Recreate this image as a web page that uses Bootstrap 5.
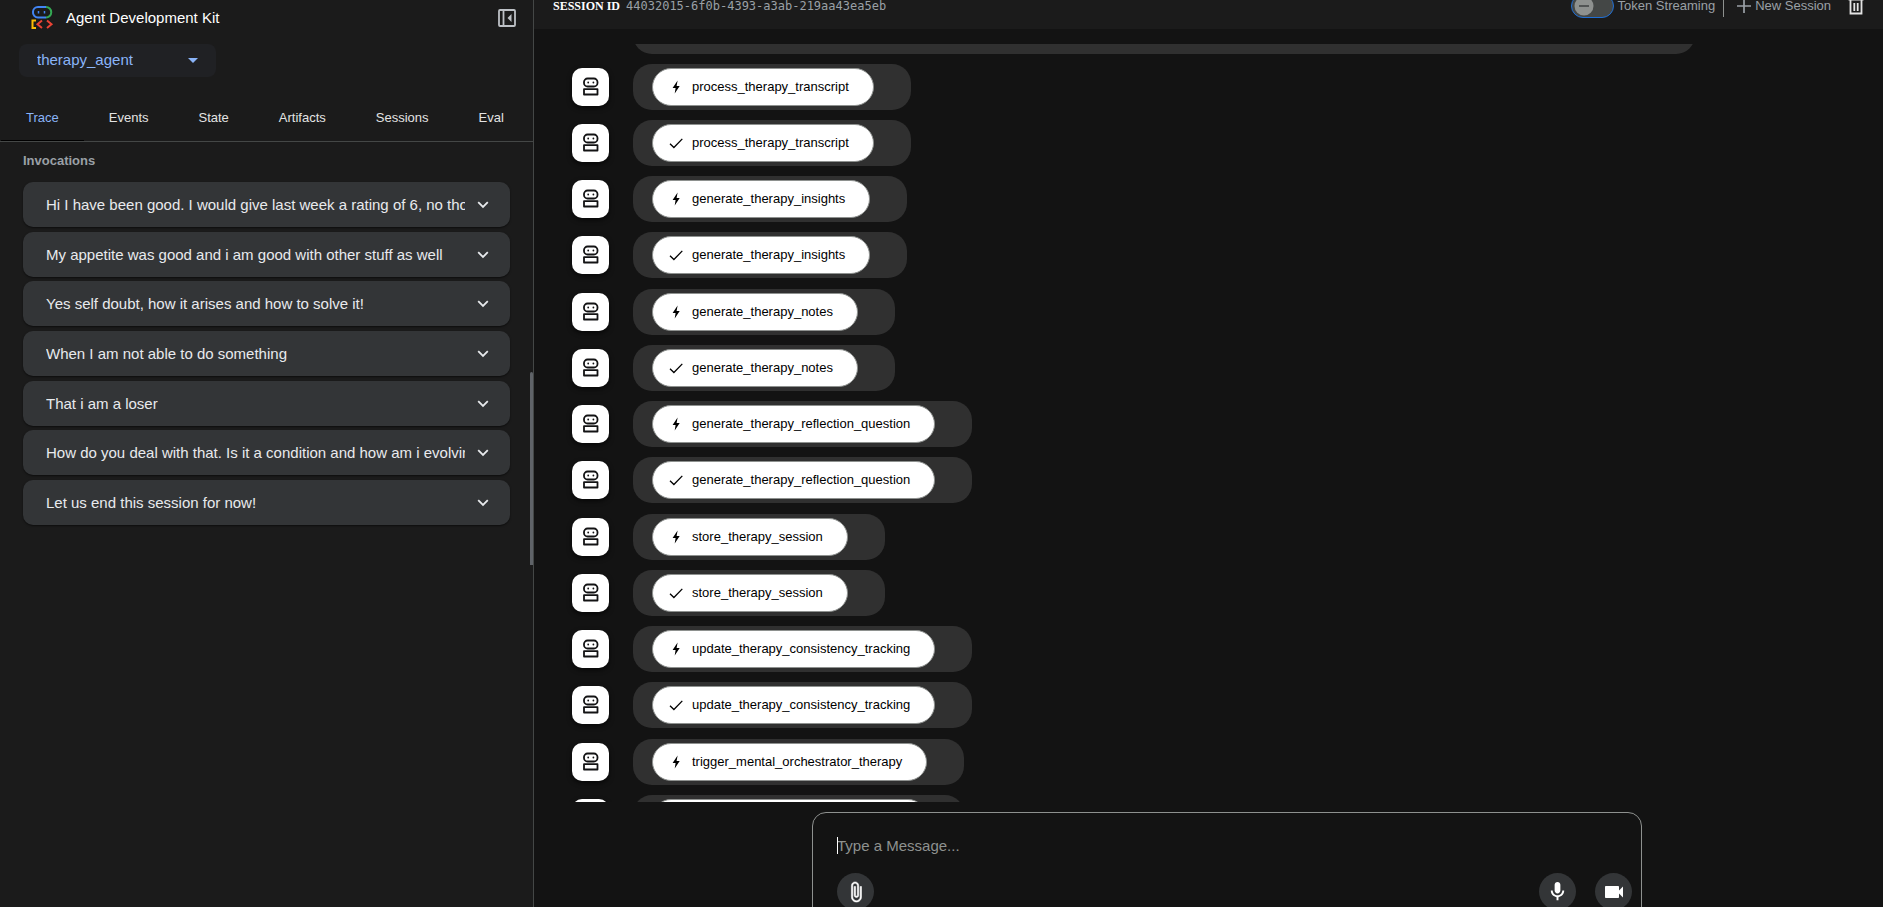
<!DOCTYPE html>
<html lang="en">
<head>
<meta charset="utf-8">
<meta name="viewport" content="width=device-width, initial-scale=1">
<title>Agent Development Kit</title>
<link href="https://cdn.jsdelivr.net/npm/bootstrap@5.3.0/dist/css/bootstrap.min.css" rel="stylesheet">
<style>
body{background:#131313;color:#e8eaed;font-family:"Liberation Sans",Arial,sans-serif;font-size:13px;line-height:20px}
svg{display:block;flex:none}
.side-panel{width:534px;background:#1b1b1b;border-right:1px solid #444746}
.brand-row{height:32px;padding:0 16px 0 30px}
.brand-name{font-size:15px;line-height:20px;color:#fff;font-weight:400}
.icon-btn{color:#bdc1c6;background:none;border:0;padding:0}
.app-pick{width:197px;height:33px;margin:12px 0 0 19px;background:#202124;border-radius:8px}
.app-pick select{appearance:none;background:none;border:0;color:#8ab4f8;font-size:15px;padding:0 18px;width:100%;height:32px;outline:0;display:block}
.app-pick svg{position:absolute;right:18px;top:14px;pointer-events:none}
.tab-strip{margin-top:17px;height:48px;padding-left:1px;border-bottom:1px solid #444746}
.tab-strip .nav-link{color:#e3e3e3;padding:0 25px;line-height:48px;height:47px;font-size:13px;border-bottom:1px solid transparent;border-radius:0}
.tab-strip .nav-link.active{color:#8ab4f8;border-bottom-color:#000}
.section-title{color:#9aa0a6;font-size:13px;line-height:20px;font-weight:700;margin:9px 23px 11px}
.invocations{margin:0 23px}
.invocations li{margin-bottom:5px}
.invocations li:nth-child(3n+2){margin-bottom:4px}
.invocation{height:45px;background:#333537;border:0;border-radius:10px;padding:0 21px 0 23px;color:#e8eaed;font-size:15px;box-shadow:0 1px 2px #0008}
.invocation span{overflow:hidden;white-space:nowrap;text-align:left;flex:1;margin-right:12px}
.resize-grip{position:absolute;right:0;top:41%;width:3px;height:193px;background:#5f6368;border-radius:2px 2px 0 0}
.top-bar{height:46px;margin-top:-17px;background:#1b1b1b;padding:0 18px 0 19px;color:#9aa0a6}
.session-label{font:700 12px/16px "Liberation Serif",serif;color:#fff;margin-right:6px}
.session-id{font:12px/16px "DejaVu Sans Mono",monospace;color:#9aa0a6}
.stream-switch.form-check-input{width:43px;height:24px;margin:0 4px 0 0;border:1px solid #1f6fd6;border-radius:12px;background:#444746;appearance:none;box-shadow:none}
.switch-box svg{position:absolute;left:3px;top:2px;pointer-events:none}
.bar-text{font-size:13px;line-height:20px;color:#9aa0a6}
.split-line{width:1px;height:22px;background:#8e918f;margin:0 13px 0 8px}
.log{margin-top:15px;padding-left:38px;min-height:0}
.log-row{height:46px;margin-bottom:10px;gap:24px}
.log-row:nth-child(4n+5){margin-bottom:11px}
.bot-face{width:37px;height:38px;border-radius:10px;background:#fff;color:#131314;box-shadow:0 2px 5px #000a}
.bubble{height:46px;border-radius:19px;background:#303030;padding:0 37px 0 19px}
.long-bubble{height:46px;border-radius:19px;background:#303030;width:81%;margin-left:61px}
.log-tail{flex:none;height:10px;margin-bottom:10px;overflow:hidden}
.chip{height:38px;border-radius:19px;border:1px solid #8e918f;background:#fff;color:#000;font-size:13px;padding:0 24px 0 15px;gap:8px}
.composer-zone{flex:0 0 105px;min-height:0;padding:10px 0 0 37px}
.composer{width:830px;max-width:100%;height:125px;flex:none;border:1px solid #8e918f;border-radius:14px;padding:22px 9px 0 24px}
.composer textarea{background:none;border:0;outline:0;resize:none;color:#e8eaed;font-size:15px;line-height:22px;height:22px;padding:0;width:100%;display:block;overflow:hidden}
.composer textarea::placeholder{color:#8e918f;opacity:1}
.text-caret{position:absolute;left:0;top:2px;width:1px;height:17px;background:#fff}
.round-btn{width:37px;height:37px;border:0;padding:0;border-radius:50%;background:#333537;color:#fff}
.media-btns{gap:19px}
</style>
</head>
<body>
<svg width="0" height="0" class="position-absolute" aria-hidden="true">
<symbol id="bot" viewBox="0 0 20 20"><g fill="none" stroke="currentColor" stroke-width="1.8"><rect x="3" y="1.5" width="13.5" height="8" rx="3.6"/><path d="M3 12.2h13.5v5.3H3z" stroke-linejoin="round"/></g><circle cx="7.200" cy="5.5" r=".9" fill="currentColor"/><circle cx="12.4" cy="5.5" r=".9" fill="currentColor"/></symbol>
<symbol id="bolt" viewBox="0 0 16 16"><path d="M9.6 1.5 4.6 9h3l-.9 5.5L11.700 7H8.600z" fill="currentColor"/></symbol>
<symbol id="check" viewBox="0 0 16 16"><path d="m2 8.7 3.900 3.800 8.400-8.600" fill="none" stroke="currentColor" stroke-width="1.300"/></symbol>
<symbol id="chev" viewBox="0 0 12 12"><path d="m1.200 3.200 4.800 4.800 4.800-4.800" fill="none" stroke="currentColor" stroke-width="1.800"/></symbol>
</svg>
<div class="d-flex vh-100 overflow-hidden">
<aside class="side-panel position-relative flex-shrink-0">
 <header class="brand-row d-flex align-items-center">
  <svg width="24" height="26" viewBox="0 0 24 26" fill="none" stroke-width="2" class="me-2 mt-1"><path d="M12 2H8a5 5 0 0 0-5 5 5 5 0 0 0 5 5.500h8" stroke="#4285f4"/><path d="M12 2h4" stroke="#4285f4"/><path d="M16 2a5.200 5.200 0 0 1 0 10.500" stroke="#34a853"/><path d="M8.500 6v2.400M14.500 6v2.400" stroke="#4285f4" stroke-width="1.500"/><path d="M6 15.500H2.500V23H6" stroke="#fbbc04"/><path d="m12 15.500-4.500 3.700 4.500 3.700M17 15.500l4.500 3.700-4.500 3.700" stroke="#ea4335"/></svg>
  <h1 class="brand-name mb-0 mt-1 ms-1">Agent Development Kit</h1>
  <button class="icon-btn ms-auto mt-1" aria-label="Close panel"><svg width="20" height="20" viewBox="0 0 20 20" fill="none" stroke="currentColor" stroke-width="1.800"><rect x="2" y="2" width="16" height="16" rx="1"/><path d="M6.500 2v16"/><path d="M14.500 6 10.500 10l4 4z" fill="currentColor" stroke="none"/></svg></button>
 </header>
 <div class="app-pick position-relative"><select aria-label="Agent"><option>therapy_agent</option></select><svg width="10" height="5" viewBox="0 0 10 5"><path d="M0 0h10L5 5z" fill="#8ab4f8"/></svg></div>
 <nav class="tab-strip nav flex-nowrap">
  <a class="nav-link active" href="#">Trace</a><a class="nav-link" href="#">Events</a><a class="nav-link" href="#">State</a><a class="nav-link" href="#">Artifacts</a><a class="nav-link" href="#">Sessions</a><a class="nav-link" href="#">Eval</a>
 </nav>
 <h2 class="section-title">Invocations</h2>
 <ul class="invocations list-unstyled">
  <li><button class="invocation w-100 d-flex align-items-center"><span>Hi I have been good. I would give last week a rating of 6, no thoughts of</span><svg width="12" height="12"><use href="#chev"/></svg></button></li>
  <li><button class="invocation w-100 d-flex align-items-center"><span>My appetite was good and i am good with other stuff as well</span><svg width="12" height="12"><use href="#chev"/></svg></button></li>
  <li><button class="invocation w-100 d-flex align-items-center"><span>Yes self doubt, how it arises and how to solve it!</span><svg width="12" height="12"><use href="#chev"/></svg></button></li>
  <li><button class="invocation w-100 d-flex align-items-center"><span>When I am not able to do something</span><svg width="12" height="12"><use href="#chev"/></svg></button></li>
  <li><button class="invocation w-100 d-flex align-items-center"><span>That i am a loser</span><svg width="12" height="12"><use href="#chev"/></svg></button></li>
  <li><button class="invocation w-100 d-flex align-items-center"><span>How do you deal with that. Is it a condition and how am i evolving</span><svg width="12" height="12"><use href="#chev"/></svg></button></li>
  <li><button class="invocation w-100 d-flex align-items-center"><span>Let us end this session for now!</span><svg width="12" height="12"><use href="#chev"/></svg></button></li>
 </ul>
 <div class="resize-grip"></div>
</aside>
<main class="flex-grow-1 d-flex flex-column overflow-hidden">
 <header class="top-bar d-flex align-items-center flex-shrink-0">
  <span class="session-label">SESSION ID</span><span class="session-id">44032015-6f0b-4393-a3ab-219aa43ea5eb</span>
  <div class="ms-auto d-flex align-items-center">
   <div class="switch-box position-relative d-flex"><input class="stream-switch form-check-input" type="checkbox" id="stream"><svg width="20" height="20" viewBox="0 0 20 20"><circle cx="10" cy="10" r="9.500" fill="#8e918f"/><path d="M5 10h10" stroke="#444746" stroke-width="1.600"/></svg></div>
   <label class="bar-text" for="stream">Token Streaming</label>
   <div class="split-line"></div>
   <button class="icon-btn bar-text d-flex align-items-center"><svg class="me-1" width="14" height="14" viewBox="0 0 14 14"><path d="M7 0v14M0 7h14" stroke="currentColor" stroke-width="1.700"/></svg>New Session</button>
   <button class="icon-btn ms-3" aria-label="Delete session"><svg width="18" height="20" viewBox="0 0 18 20" fill="none" stroke="#e3e3e3" stroke-width="1.800"><path d="M1.500 3.500h15M6 3V1h6v2M3.500 4v13.500h11V4M7.300 7v8M10.700 7v8"/></svg></button>
  </div>
 </header>
 <section class="log flex-grow-1 overflow-hidden d-flex flex-column" id="log">
  <div class="log-tail d-flex align-items-end"><div class="long-bubble"></div></div>
 </section>
 <form class="composer-zone d-flex justify-content-center align-items-start">
  <div class="composer">
   <div class="position-relative"><textarea aria-label="Message" placeholder="Type a Message..."></textarea><i class="text-caret"></i></div>
   <div class="d-flex justify-content-between mt-3">
    <button type="button" class="round-btn d-flex align-items-center justify-content-center" aria-label="Attach file"><svg width="22" height="22" viewBox="0 0 24 24"><path fill="currentColor" d="M16.500 6v11.500c0 2.210-1.790 4-4 4s-4-1.790-4-4V5c0-1.380 1.120-2.500 2.500-2.500s2.500 1.120 2.500 2.500v10.500c0 .550-.450 1-1 1s-1-.450-1-1V6H10v9.500c0 1.380 1.120 2.500 2.500 2.500s2.500-1.120 2.500-2.500V5c0-2.210-1.790-4-4-4S7 2.790 7 5v12.500c0 3.040 2.460 5.500 5.500 5.500s5.500-2.460 5.500-5.500V6z" stroke="currentColor" stroke-width=".6"/></svg></button>
    <div class="media-btns d-flex">
    <button type="button" class="round-btn d-flex align-items-center justify-content-center" aria-label="Use microphone"><svg width="23" height="23" viewBox="0 0 24 24"><path fill="currentColor" d="M12 14c1.660 0 3-1.340 3-3V5c0-1.660-1.340-3-3-3S9 3.340 9 5v6c0 1.660 1.340 3 3 3zm5-3c0 2.760-2.240 5-5 5s-5-2.240-5-5H5c0 3.530 2.610 6.430 6 6.920V21h2v-3.080c3.390-.490 6-3.390 6-6.920z"/></svg></button>
    <button type="button" class="round-btn d-flex align-items-center justify-content-center" aria-label="Use camera"><svg width="24" height="24" viewBox="0 0 24 24"><path fill="currentColor" d="M17 10.500V7c0-.550-.450-1-1-1H4c-.550 0-1 .450-1 1v10c0 .550.450 1 1 1h12c.550 0 1-.450 1-1v-3.500l4 4v-11z"/></svg></button>
    </div>
   </div>
  </div>
 </form>
</main>
</div>
<script src="https://cdn.jsdelivr.net/npm/bootstrap@5.3.0/dist/js/bootstrap.bundle.min.js"></script>
<script>
// Every tool call is logged twice: once when invoked, once when finished.
const calls = ["process_therapy_transcript", "generate_therapy_insights", "generate_therapy_notes", "generate_therapy_reflection_question", "store_therapy_session", "update_therapy_consistency_tracking", "trigger_mental_orchestrator_therapy"];
const log = document.getElementById("log");
for (const name of calls) for (const icon of ["bolt", "check"])
  log.insertAdjacentHTML("beforeend", `<div class="log-row d-flex align-items-center flex-shrink-0"><div class="bot-face d-flex align-items-center justify-content-center"><svg width="20" height="20"><use href="#bot"/></svg></div><div class="bubble d-flex align-items-center"><button class="chip d-flex align-items-center"><svg width="16" height="16"><use href="#${icon}"/></svg><span>${name}</span></button></div></div>`);
</script>
</body>
</html>
